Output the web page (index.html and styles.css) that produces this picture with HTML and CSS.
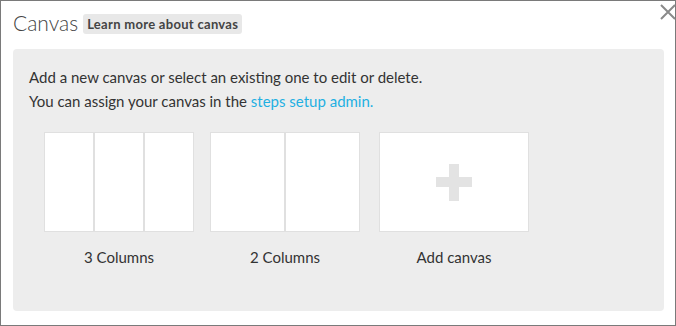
FILE: index.html
```html
<!DOCTYPE html>
<html>
<head>
    <title>Canvas</title>
    <meta charset="utf-8">
    <link rel="stylesheet" href="styles.css">
</head>
<body>
    <div class="modal">
        <a href="#" class="close" title="Close">
            <svg width="18" height="18" viewBox="0 0 18 18"><path d="M2 2 L16 16 M16 2 L2 16" stroke="#8a8a8a" stroke-width="2" fill="none"/></svg>
        </a>
        <div class="header">
            <h1>Canvas</h1>
            <a href="#" class="badge">Learn more about canvas</a>
        </div>

        <div class="panel">
            <p>Add a new canvas or select an existing one to edit or delete.</p>
            <p>You can assign your canvas in the <a href="#" class="link">steps setup admin.</a></p>

            <div class="canvas-list">
                <div class="canvas-item">
                    <div class="preview">
                        <div class="col"></div>
                        <div class="col"></div>
                        <div class="col"></div>
                    </div>
                    <div class="canvas-name">3 Columns</div>
                </div>
                <div class="canvas-item">
                    <div class="preview">
                        <div class="col"></div>
                        <div class="col"></div>
                    </div>
                    <div class="canvas-name">2 Columns</div>
                </div>
                <div class="canvas-item add">
                    <div class="preview add-preview">
                        <span class="plus"></span>
                    </div>
                    <div class="canvas-name">Add canvas</div>
                </div>
            </div>
        </div>
    </div>
</body>
</html>
```

FILE: styles.css
```css
html, body {
    margin: 0;
    padding: 0;
}
body {
    font-family: Lato, "Open Sans", sans-serif;
    color: #333;
    background-color: white;
}
.modal {
    position: relative;
    width: 676px;
    height: 326px;
    box-sizing: border-box;
    border: 1px solid #7a7a7a;
    padding: 0 11px 0 12px;
}
.close {
    position: absolute;
    top: 2px;
    right: -2px;
    display: block;
    width: 18px;
    height: 18px;
}
.header {
    display: flex;
    align-items: center;
    height: 28px;
    padding: 9px 0 11px 0;
}
h1 {
    font-size: 21px;
    font-weight: 300;
    line-height: 24px;
    color: #444;
    margin: 0 5px 3px 0;
}
.badge {
    font-size: 13px;
    font-weight: bold;
    letter-spacing: 0.3px;
    line-height: 14px;
    color: #444;
    background-color: #e8e8e8;
    border-radius: 3px;
    padding: 3px 4px;
    text-decoration: none;
}
.panel {
    background-color: #ededed;
    border-radius: 4px;
    height: 262px;
    padding: 16px 16px 0 16px;
    box-sizing: border-box;
}
.panel p {
    font-size: 15px;
    margin: 0;
    line-height: 24px;
}
.link {
    color: #1fb0e2;
    text-decoration: none;
}
.canvas-list {
    display: flex;
    gap: 16px;
    padding-left: 15px;
    margin-top: 19px;
}
.canvas-item.add {
    margin-left: 3px;
}
.preview {
    display: flex;
    width: 150px;
    height: 100px;
    box-sizing: border-box;
    border: 1px solid #e0e0e0;
    background-color: #e0e0e0;
    gap: 2px;
}
.col {
    flex: 1;
    background-color: white;
}
.add-preview {
    background-color: white;
    align-items: center;
    justify-content: center;
}
.plus {
    position: relative;
    width: 36px;
    height: 37px;
}
.plus::before, .plus::after {
    content: "";
    position: absolute;
    background-color: #e3e3e3;
}
.plus::before {
    left: 0;
    right: 0;
    top: 13px;
    height: 10px;
}
.plus::after {
    top: 0;
    bottom: 0;
    left: 13px;
    width: 10px;
}
.canvas-name {
    text-align: center;
    font-size: 15px;
    line-height: 24px;
    margin-top: 13px;
}
```
